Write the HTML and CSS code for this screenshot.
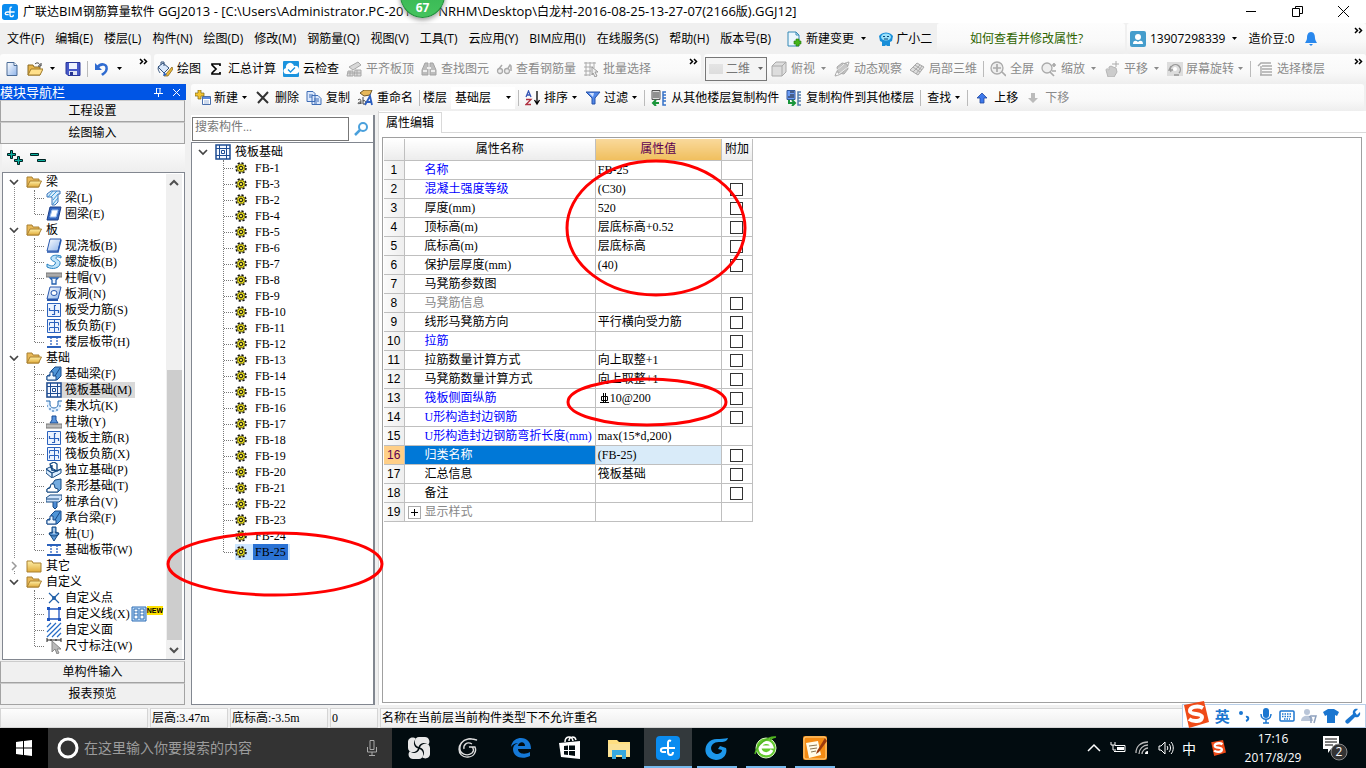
FILE: index.html
```html
<!DOCTYPE html>
<html lang="zh-CN">
<head>
<meta charset="utf-8">
<title>广联达BIM钢筋算量软件 GGJ2013</title>
<link rel="stylesheet" href="styles.css">
</head>
<body>
<svg class="sprite" aria-hidden="true">
<defs>
<linearGradient id="gBlue" x1="0" y1="0" x2="1" y2="1"><stop offset="0" stop-color="#fff"/><stop offset="1" stop-color="#8fb4ea"/></linearGradient>
<linearGradient id="gFold" x1="0" y1="0" x2="0" y2="1"><stop offset="0" stop-color="#fff0a8"/><stop offset="1" stop-color="#e0ab3a"/></linearGradient>
</defs>
<symbol id="caret" viewBox="0 0 7 4"><path d="M1 0h5L3.500 3z" fill="currentColor"/></symbol>
<symbol id="more" viewBox="0 0 9 7"><path d="M1 1l2.500 2.500L1 6M5 1l2.500 2.500L5 6" fill="none" stroke="#000" stroke-width="1.500"/></symbol>
<symbol id="logo" viewBox="0 0 24 24"><rect width="24" height="24" rx="4" fill="#0a8cf0"/><path d="M15 5c-2-1-3 0-3 2v9c0 4 5 4 5 0M19 12H8c-4 0-4 4-1 4h3" fill="none" stroke="#fff" stroke-width="2"/></symbol>
<symbol id="new" viewBox="0 0 16 16"><path d="M3 1.500h7l3 3v10H3z" fill="url(#gBlue)" stroke="#4a6b96"/><path d="M10 1.500v3h3" fill="#fff" stroke="#4a6b96"/></symbol>
<symbol id="open" viewBox="0 0 16 16"><path d="M1 14V4h5l1 2h6v8z" fill="#e7b64d" stroke="#8c6a22"/><path d="M1 14l3-6h12l-3 6z" fill="#ffe08a" stroke="#a07a28"/><path d="M8 3c2-2 4-1 5 1m1-2v3h-3" fill="none" stroke="#333"/></symbol>
<symbol id="save" viewBox="0 0 16 16"><path d="M1 1.500h14v13H3l-2-2z" fill="#4658c8" stroke="#28369a"/><path d="M4 2h8v6H4z" fill="#eef2ff"/><path d="M4 10h8v4H4z" fill="#dfe4f4"/><path d="M5 11h3v3H5z" fill="#26338f"/></symbol>
<symbol id="undo" viewBox="0 0 16 16"><path d="M3 7c4-6 12-4 9 3-1 2-3 3-4 4" fill="none" stroke="#2f6bd0" stroke-width="2.500"/><path d="M1 2v7h7z" fill="#2f6bd0"/></symbol>
<symbol id="paint" viewBox="0 0 16 16"><path d="M1 6l5-4 6 5-5 5z" fill="#dbe9fb" stroke="#32527d"/><path d="M2 5c-2 3 0 5 1 7M4 4V1h3v4" fill="none" stroke="#32527d"/><path d="M15 6l-6 7-2 2h4l5-7z" fill="#ebb83c" stroke="#7b5a12" stroke-width=".700"/><path d="M7 11l3 3-4 1z" fill="#2862c4"/></symbol>
<symbol id="sigma" viewBox="0 0 16 16"><path d="M12 5V3H4v1l4 4-4 4v1h8v-2" fill="none" stroke="#000" stroke-width="1.700"/></symbol>
<symbol id="cloud" viewBox="0 0 16 16"><rect width="16" height="16" rx="1" fill="#1b93de"/><path d="M4 13a3 3 0 01-1-6 4 4 0 018-2 4 4 0 012 8z" fill="#fff"/><path d="M5 8.500l2.500 2.500L12 6.500" fill="none" stroke="#1b93de" stroke-width="1.300"/></symbol>
<symbol id="gslab" viewBox="0 0 16 16"><path d="M3 6l9-5 3 3-8 5zM2 10h5v5H1zM9 9h6v6H8z" fill="#d8d8d8" stroke="#a8a8a8"/><path d="M2 12h13M4 10v5M11 9v6" stroke="#a8a8a8"/></symbol>
<symbol id="gbino" viewBox="0 0 16 16"><path d="M4 2h3v12H1V9zM9 2h3l3 7v5H9z" fill="#bdbdbd" stroke="#a3a3a3"/><path d="M6 7h4M2 10h4M10 10h4" stroke="#eee" stroke-width="2"/></symbol>
<symbol id="gglass" viewBox="0 0 16 16"><path d="M2 9l4-5M11 9l3-5 1 1v5" fill="none" stroke="#aaa" stroke-width="1.500"/><circle cx="4" cy="10" r="2.500" fill="#eee" stroke="#aaa" stroke-width="1.300"/><circle cx="11" cy="10" r="2.500" fill="#eee" stroke="#aaa" stroke-width="1.300"/></symbol>
<symbol id="gbatch" viewBox="0 0 16 16"><path d="M1 2h12M1 6h9M1 10h7M1 14h6M3 1v14M7 1v14M11 1v6" stroke="#aaa" fill="none"/><path d="M9 6l6 5h-3l2 4-2 1-2-4-1 2z" fill="#eee" stroke="#999"/></symbol>
<symbol id="gcube" viewBox="0 0 16 16"><path d="M1 5l4-4h10v10l-4 4H1z" fill="#ddd" stroke="#aaa"/><path d="M1 5h10v10M11 5l4-4" fill="none" stroke="#aaa"/></symbol>
<symbol id="gorbit" viewBox="0 0 16 16"><path d="M3 6l5-4 5 1 1 5-4 5-6-1z" fill="#c8c8c8" stroke="#aaa"/><path d="M15 1C8 2 3 8 1 15c7-1 13-7 14-14z" fill="none" stroke="#aaa"/><path d="M2 10l8-7M5 13l9-7" stroke="#eee"/></symbol>
<symbol id="gpart" viewBox="0 0 16 16"><path d="M1 9l7-7 7 4-6 8z" fill="#ddd" stroke="#aaa"/><path d="M4 6l7 5M6 4l7 5M4 11l7-7M7 13l6-8" stroke="#aaa"/></symbol>
<symbol id="gfull" viewBox="0 0 16 16"><circle cx="7" cy="7" r="6" fill="#eee" stroke="#aaa" stroke-width="1.300"/><path d="M3 7h8M7 3v8M12 11l4 4" stroke="#aaa" stroke-width="1.700"/></symbol>
<symbol id="gzoom" viewBox="0 0 16 16"><circle cx="6" cy="7" r="5" fill="#eee" stroke="#aaa" stroke-width="1.300"/><path d="M9 11l4 4M11 4h4M13 2v4M11 10h4" stroke="#aaa" stroke-width="1.700"/></symbol>
<symbol id="gpan" viewBox="0 0 16 16"><path d="M2 9c1-3 2 0 3 0V6l2-1 2 1 3 1 1 4-3 5H4z" fill="#ccc" stroke="#b5b5b5"/><path d="M8 3h7M12 0v6" stroke="#aaa"/></symbol>
<symbol id="grot" viewBox="0 0 16 16"><path d="M0 1h16v14H0z" fill="#ddd"/><path d="M4 11a5 5 0 118 1M4 5L2 9h4M12 14h-5" fill="none" stroke="#999" stroke-width="1.300"/><circle cx="8" cy="8" r="2" fill="#fff"/></symbol>
<symbol id="gfloor" viewBox="0 0 16 16"><path d="M1 5l3-3h10M5 5h10M5 8h10M5 11h10M3 14h12M4 5v9" fill="none" stroke="#aaa" stroke-width="1.400"/></symbol>
<symbol id="add" viewBox="0 0 16 16"><path d="M7.500 6.500h8v8h-8z" fill="#fff" stroke="#4b70ad"/><path d="M8 7h7v2H8z" fill="#5e8be0"/><path d="M9 11h5M9 13h5" stroke="#9db5da"/><path d="M3 0h3v3h3v3H6v3H3V6H0V3h3z" fill="#f4c430" stroke="#7a6414" stroke-width=".700"/></symbol>
<symbol id="del" viewBox="0 0 16 16"><path d="M2 2l11 11M13 2L3 13" stroke="#333" stroke-width="2"/></symbol>
<symbol id="copy" viewBox="0 0 16 16"><path d="M1 1.500h6l2 2v8H1zM6 5.500h6l3 3v6H6z" fill="#dce9fd" stroke="#3f6db5"/><path d="M3 5h4M3 7h3M8 9h5M8 11h5M8 13h3" stroke="#3f6db5"/></symbol>
<symbol id="rename" viewBox="0 0 16 16"><path d="M3 3l4-3h8l-2 5-6 1z" fill="#e7b85a" stroke="#6d572a"/><path d="M1 10c3-2 3 0 3 4M4 12c-4 0-4 3 0 1M6 7v7c4 1 3-5 0-3" fill="none" stroke="#444"/><path d="M8 15l5-9 2 9M10 12h5" fill="none" stroke="#2d5fc0" stroke-width="1.800"/></symbol>
<symbol id="sort" viewBox="0 0 16 16"><path d="M1 7l2.500-6L6 7M2 5h3" fill="none" stroke="#3656b5" stroke-width="1.300"/><path d="M1 9.500h5l-5 5h5" fill="none" stroke="#b03040" stroke-width="1.300"/><path d="M12 1v12M9.500 10l2.500 4 2.500-4" fill="none" stroke="#000" stroke-width="1.300"/></symbol>
<symbol id="filter" viewBox="0 0 16 16"><path d="M1 2h14l-5 6v6H7V8z" fill="#4f86e8" stroke="#2853a8"/><path d="M4 3h5l-1 4z" fill="#cfe0ff"/></symbol>
<symbol id="cpf" viewBox="0 0 16 16"><path d="M1 .500h8v9H1z" fill="#ddd" stroke="#555"/><path d="M2 3h6M2 5h6M2 7h6" stroke="#444"/><path d="M15 2h-3v13h3M12 5h3M12 8h3M12 11h3" stroke="#3672c8" fill="none" stroke-width="1.500"/><path d="M2 13h6M5 10l-3 3 3 3" stroke="#19953a" fill="none" stroke-width="2"/></symbol>
<symbol id="cpt" viewBox="0 0 16 16"><path d="M1 .500h8v9H1z" fill="#6c9cf5" stroke="#345b9f"/><path d="M4 2h4M4 5h4M2 7h6" stroke="#222"/><path d="M15 2h-3v13h3M12 5h3M12 8h3M12 11h3" stroke="#567fae" fill="none" stroke-width="1.500"/><path d="M3 10v3h5M6 10l3 3-3 3" stroke="#19953a" fill="none" stroke-width="2"/></symbol>
<symbol id="up" viewBox="0 0 16 16"><path d="M8 3l5 5h-3v5H6V8H3z" fill="#3d78ea" stroke="#2148a0" stroke-width=".800"/></symbol>
<symbol id="down" viewBox="0 0 16 16"><path d="M8 13l5-5h-3V3H6v5H3z" fill="#bbb"/></symbol>
<symbol id="docadd" viewBox="0 0 16 16"><path d="M2 1h8l3 3v11H2z" fill="#eaf6fd" stroke="#3488b5"/><path d="M10 1v3h3" fill="none" stroke="#3488b5"/><path d="M10 8h3v2h2v3h-2v2h-3v-2H8v-3h2z" fill="#44b51a" stroke="#26760b" stroke-width=".600"/></symbol>
<symbol id="robot" viewBox="0 0 16 16"><path d="M3 3a7 5 0 0110 0l2 2-1 5-2 1v4h-3l-1-1-1 1H4v-4l-2-1-1-5z" fill="#198ed8"/><ellipse cx="8" cy="6" rx="5" ry="3.500" fill="#9be2fb"/><path d="M5 5.500h2M9 5.500h2M6 8h4" stroke="#0a4478" stroke-width="1.200"/></symbol>
<symbol id="user" viewBox="0 0 16 16"><rect width="16" height="16" rx="2" fill="#459dcc"/><circle cx="8" cy="6" r="3" fill="#fff"/><path d="M3 13c0-4 3-4 5-2 2-2 5-2 5 2z" fill="#fff"/></symbol>
<symbol id="bell" viewBox="0 0 16 16"><path d="M8 1c3 0 4 3 4 6 0 2 1 3 2 5H2c1-2 2-3 2-5 0-3 1-6 4-6z" fill="#2988ed"/><path d="M6 13h4l-2 2z" fill="#2988ed"/></symbol>
<symbol id="expd" viewBox="0 0 12 12"><path d="M2 4l4 4 4-4" fill="none" stroke="#444" stroke-width="1.700"/></symbol>
<symbol id="expr" viewBox="0 0 12 12"><path d="M4 2l4 4-4 4" fill="none" stroke="#999" stroke-width="1.500"/></symbol>
<symbol id="fo" viewBox="0 0 16 16"><path d="M1 13V3h5l1 2h6v8z" fill="#e9b958" stroke="#a98030"/><path d="M1 13l3-6h11.500l-3 6z" fill="url(#gFold)" stroke="#a98030"/></symbol>
<symbol id="fc" viewBox="0 0 16 16"><path d="M1 14V3h5l1 2h8v9z" fill="url(#gFold)" stroke="#a98030"/></symbol>
<symbol id="beam" viewBox="0 0 16 16"><path d="M1 4l4-3h9v3h-2v8l-3 3H6V7H1z" fill="#d9ecfc" stroke="#3c74b8"/><path d="M2 7l5-6M5 7l6-6M7 10l5-6M7 14l5-6" stroke="#3c9ad8"/></symbol>
<symbol id="ring" viewBox="0 0 16 16"><path d="M4 1h11l-3 13H1z" fill="#3467c0" stroke="#1b3f8a"/><path d="M6 4h6l-2 7H4z" fill="#fff" stroke="#9fc2f2"/></symbol>
<symbol id="slab" viewBox="0 0 16 16"><path d="M4 1h11l-3 12H1z" fill="url(#gBlue)" stroke="#2757ad"/><path d="M1 14h11l3-12" fill="none" stroke="#2757ad" stroke-width="1.500"/></symbol>
<symbol id="spiral" viewBox="0 0 16 16"><path d="M15 2C9 0 4 2 5 5s6 2 4 5-5 2-8 0v3c6 3 12 1 13-3s-4-4-4-6 3-1 5 0z" fill="#bfe4fa" stroke="#227ec0"/></symbol>
<symbol id="cap" viewBox="0 0 16 16"><path d="M0 3h16v4H0z" fill="#aaa" stroke="#777"/><path d="M4 8h8l-2 2v4H6v-4z" fill="#eef5ff" stroke="#2460b0" stroke-width="1.300"/></symbol>
<symbol id="hole" viewBox="0 0 16 16"><path d="M4 1h11l-3 12H1z" fill="url(#gBlue)" stroke="#2757ad"/><path d="M1 14h11" stroke="#2757ad" stroke-width="2"/><ellipse cx="8" cy="7" rx="3" ry="2.500" fill="#fff" stroke="#2757ad"/></symbol>
<symbol id="bar1" viewBox="0 0 16 16"><path d="M1.500 1.500h13v13h-13z" fill="#edf4ff" stroke="#2b62bd"/><path d="M10 3.500H8.500v9H6M3.500 6v2.500h9V11" fill="none" stroke="#2b62bd" stroke-width="1.200"/></symbol>
<symbol id="bar2" viewBox="0 0 16 16"><path d="M1.500 1.500h13v13h-13z" fill="#edf4ff" stroke="#2b62bd"/><path d="M8.500 2v12M3.500 7.500v-3h9v3M3.500 12.500v-3h9v3" fill="none" stroke="#2b62bd"/></symbol>
<symbol id="strip" viewBox="0 0 16 16"><path d="M1 3h14M1 13h14" stroke="#2b62bd" stroke-width="2"/><path d="M5 3v10M11 3v10" stroke="#2b62bd" stroke-width="1.300" stroke-dasharray="2 1"/></symbol>
<symbol id="found" viewBox="0 0 16 16"><path d="M1 14v-4l4-2V5l4-4h6v9l-4 4z" fill="#4e94d6" stroke="#174a8b"/><path d="M1 14v-4h3V6h3v4h3v4z" fill="#eef7ff" stroke="#174a8b"/><path d="M9 10l5-8" stroke="#174a8b"/></symbol>
<symbol id="raft" viewBox="0 0 16 16"><path d="M1 1h14v14H1z" fill="#f4f8ff" stroke="#1e4c92" stroke-width="1.500"/><path d="M1 4.500h14M1 11.500h14M4.500 1v14M11.500 1v14" stroke="#1e4c92"/><path d="M6.500 6.500h3v3h-3z" fill="#fff" stroke="#1e4c92"/></symbol>
<symbol id="pit" viewBox="0 0 16 16"><path d="M1 3h3v4c1 4 7 4 8 0V3h3v5c-1 8-13 8-14 0z" fill="#dfefff"/><path d="M0 3h4v4c1 4 7 4 8 0V3h4" fill="none" stroke="#2468ae"/><path d="M1 8h1M3 11h2M6 13h2M10 12h2M13 8h2" stroke="#2468ae"/></symbol>
<symbol id="pier" viewBox="0 0 16 16"><path d="M6 2h4v4l2 3H4l2-3z" fill="#5b96df" stroke="#174b95"/><path d="M0 10h16v4H0z" fill="#bbb" stroke="#777"/></symbol>
<symbol id="iso" viewBox="0 0 16 16"><path d="M0 7l4-2 7 4 4-2v4l-9 5-6-5z" fill="#dceeff" stroke="#174a82"/><path d="M4 2l4-2 3 2v7L6 8zM6 3v6M0 7l6 4v4M6 11l9-4" fill="none" stroke="#174a82" stroke-width="1.300"/></symbol>
<symbol id="stripf" viewBox="0 0 16 16"><path d="M1 14v-3l3-2 5-7 6-1v10l-3 3z" fill="#74abdf" stroke="#174a82"/><path d="M1 14v-3l3-1 1-4h3l1 4 3 1v3z" fill="#fff" stroke="#174a82"/></symbol>
<symbol id="pcap" viewBox="0 0 16 16"><path d="M0 4l4-3h12v4l-3 3H0z" fill="#cfe3fa" stroke="#174a82"/><path d="M0 5h13M7 8v5l2 2 2-2V8" fill="#4d8bd4" stroke="#174a82"/></symbol>
<symbol id="pile" viewBox="0 0 16 16"><path d="M6 1h4v6h3L8 15 3 7h3z" fill="#5d99d6" stroke="#174a82"/><ellipse cx="8" cy="8" rx="5" ry="2" fill="none" stroke="#174a82"/><path d="M8 2v6" stroke="#fff"/></symbol>
<symbol id="pt" viewBox="0 0 16 16"><path d="M3 3l10 10M13 3L3 13" stroke="#2160a8" stroke-width="1.200"/><circle cx="8" cy="8" r="2" fill="#2160a8"/></symbol>
<symbol id="ln" viewBox="0 0 16 16"><path d="M3 3h10v10H3z" fill="#fff" stroke="#1e55c0" stroke-width="1.300"/><path d="M1 1h3v3H1zM12 1h3v3h-3zM1 12h3v3H1zM12 12h3v3h-3z" fill="#1e55c0"/></symbol>
<symbol id="face" viewBox="0 0 16 16"><path d="M1 5l4-4M1 10l9-9M1 15L15 1M6 15l9-9M11 15l4-4" stroke="#246bc5" stroke-width="1.200"/></symbol>
<symbol id="dim" viewBox="0 0 16 16"><path d="M1 0v4M15 0v4M1 2h14M5 1v2M10 1v2" stroke="#222"/><path d="M6 3v11l3-3 2 5 2-1-2-4h4z" fill="#bbb" stroke="#888"/></symbol>
<symbol id="book" viewBox="0 0 16 16"><path d="M1 1h14v14H1z" fill="#bfdcf8" stroke="#2d6cb5"/><path d="M3 3h4v10H3zM9 3h4v10H9z" fill="#fff" stroke="#2d6cb5"/><path d="M3 6h4M3 9h4M9 6h4M9 9h4" stroke="#2d6cb5"/></symbol>
<symbol id="gear" viewBox="0 0 12 12"><circle cx="6" cy="6" r="5" fill="none" stroke="#111" stroke-width="1.600" stroke-dasharray="2.200 1.700"/><circle cx="6" cy="6" r="4" fill="#f2e61c" stroke="#55500a" stroke-width=".600"/><path d="M6 2v8M2 6h8M3.200 3.200l5.600 5.600M8.800 3.200L3.200 8.800" stroke="#55500a" stroke-width=".700"/><circle cx="6" cy="6" r="1.600" fill="#fff34d" stroke="#222"/></symbol>
<symbol id="sogou" viewBox="0 0 27 27"><path d="M2 4l20-4 5 21-20 6z" fill="#ef4b19"/><path d="M21 7c-5-3-14-1-13 3 0 4 12 2 12 6 0 5-9 5-13 2" fill="none" stroke="#fff" stroke-width="4"/></symbol>
</svg>

<div class="app">
<header class="titlebar">
  <svg class="i16"><use href="#logo"/></svg>
  <h1>广联达<span>BIM</span>钢筋算量软件<span> GGJ2013 - [C:\Users\Administrator.PC-2014</span><span class="rest">NRHM\Desktop\</span>白龙村<span>-2016-08-25-13-27-07(2166</span>版<span>).GGJ12]</span></h1>
  <div class="winbtns">
    <button aria-label="最小化"><svg viewBox="0 0 11 11"><path d="M0 5.500h10" stroke="#000"/></svg></button>
    <button aria-label="还原"><svg viewBox="0 0 11 11"><path d="M.500 2.500h7v8h-7zM3.500 2.500v-2h7v7h-3" fill="none" stroke="#000"/></svg></button>
    <button aria-label="关闭"><svg viewBox="0 0 11 11"><path d="M0 0l11 11M11 0L0 11" stroke="#000"/></svg></button>
  </div>
  <div class="badge">67</div>
</header>

<div class="menurow">
  <nav class="menu">
    <button>文件(F)</button><button>编辑(E)</button><button>楼层(L)</button><button>构件(N)</button><button>绘图(D)</button><button>修改(M)</button><button>钢筋量(Q)</button><button>视图(V)</button><button>工具(T)</button><button>云应用(Y)</button><button>BIM应用(I)</button><button>在线服务(S)</button><button>帮助(H)</button><button>版本号(B)</button>
    <button class="tb change"><svg class="i16"><use href="#docadd"/></svg>新建变更<svg class="caret"><use href="#caret"/></svg></button>
    <button class="tb tight"><svg class="i16"><use href="#robot"/></svg>广小二</button>
  </nav>
  <div class="strip hint"><a href="#help">如何查看并修改属性?</a></div>
  <div class="strip account">
    <button class="tb"><svg class="i16"><use href="#user"/></svg>13907298339<svg class="caret"><use href="#caret"/></svg></button>
    <button class="tb">造价豆:0</button>
    <button class="tb" aria-label="通知"><svg class="i16"><use href="#bell"/></svg></button>
    <button class="more" aria-label="更多"><svg><use href="#more"/></svg></button>
  </div>
</div>

<div class="toolrow">
  <div class="strip files">
    <button class="tb" aria-label="新建"><svg class="i16"><use href="#new"/></svg></button>
    <button class="tb" aria-label="打开"><svg class="i16"><use href="#open"/></svg><svg class="caret"><use href="#caret"/></svg></button>
    <button class="tb" aria-label="保存"><svg class="i16"><use href="#save"/></svg></button>
    <i class="sep"></i>
    <button class="tb" aria-label="撤销"><svg class="i16"><use href="#undo"/></svg><svg class="caret"><use href="#caret"/></svg></button>
    <button class="more" aria-label="更多"><svg><use href="#more"/></svg></button>
  </div>
  <div class="strip draw">
    <button class="tb"><svg class="i16"><use href="#paint"/></svg>绘图</button>
    <button class="tb"><svg class="i16"><use href="#sigma"/></svg>汇总计算</button>
    <button class="tb"><svg class="i16"><use href="#cloud"/></svg>云检查</button>
    <button class="tb" disabled><svg class="i16"><use href="#gslab"/></svg>平齐板顶</button>
    <button class="tb" disabled><svg class="i16"><use href="#gbino"/></svg>查找图元</button>
    <button class="tb" disabled><svg class="i16"><use href="#gglass"/></svg>查看钢筋量</button>
    <button class="tb" disabled><svg class="i16"><use href="#gbatch"/></svg>批量选择</button>
    <button class="more" aria-label="更多"><svg><use href="#more"/></svg></button>
  </div>
  <div class="strip view">
    <select class="dim" aria-label="视图" disabled><option>二维</option></select>
    <button class="tb" disabled><svg class="i16"><use href="#gcube"/></svg>俯视<svg class="caret"><use href="#caret"/></svg></button>
    <button class="tb" disabled><svg class="i16"><use href="#gorbit"/></svg>动态观察</button>
    <button class="tb" disabled><svg class="i16"><use href="#gpart"/></svg>局部三维</button>
    <i class="sep"></i>
    <button class="tb" disabled><svg class="i16"><use href="#gfull"/></svg>全屏</button>
    <button class="tb" disabled><svg class="i16"><use href="#gzoom"/></svg>缩放<svg class="caret"><use href="#caret"/></svg></button>
    <button class="tb" disabled><svg class="i16"><use href="#gpan"/></svg>平移<svg class="caret"><use href="#caret"/></svg></button>
    <button class="tb near" disabled><svg class="i16"><use href="#grot"/></svg>屏幕旋转<svg class="caret"><use href="#caret"/></svg></button>
    <i class="sep"></i>
    <button class="tb" disabled><svg class="i16"><use href="#gfloor"/></svg>选择楼层</button>
    <button class="more" aria-label="更多"><svg><use href="#more"/></svg></button>
  </div>
</div>

<main class="work">
<aside class="nav">
  <h2>模块导航栏<span><svg viewBox="0 0 9 9"><path d="M2 0h5M2.500 0v5M6 0v5M0 5.500h9M4.500 6v3" stroke="#fff" fill="none"/></svg><svg viewBox="0 0 9 9"><path d="M1 1l7 7M8 1L1 8" stroke="#fff"/></svg></span></h2>
  <button class="navbtn">工程设置</button>
  <button class="navbtn">绘图输入</button>
  <div class="pm"><svg viewBox="0 0 42 16" aria-hidden="true"><path d="M3.500 .500h2v3h3v2h-3v3h-2v-3h-3v-2h3zM10.500 6.500h2v3h3v2h-3v3h-2v-3h-3v-2h3zM23.500 3.500h8v2h-8zM30.500 9.500h8v2h-8z" fill="#0bb0a0" stroke="#022"/></svg></div>
  <div class="treebox">
  <ul class="tree">
    <li><div><svg class="ex"><use href="#expd"/></svg><svg class="i16"><use href="#fo"/></svg>梁</div>
      <ul><li><svg class="i16"><use href="#beam"/></svg>梁(L)</li><li><svg class="i16"><use href="#ring"/></svg>圈梁(E)</li></ul></li>
    <li><div><svg class="ex"><use href="#expd"/></svg><svg class="i16"><use href="#fo"/></svg>板</div>
      <ul><li><svg class="i16"><use href="#slab"/></svg>现浇板(B)</li><li><svg class="i16"><use href="#spiral"/></svg>螺旋板(B)</li><li><svg class="i16"><use href="#cap"/></svg>柱帽(V)</li><li><svg class="i16"><use href="#hole"/></svg>板洞(N)</li><li><svg class="i16"><use href="#bar1"/></svg>板受力筋(S)</li><li><svg class="i16"><use href="#bar2"/></svg>板负筋(F)</li><li><svg class="i16"><use href="#strip"/></svg>楼层板带(H)</li></ul></li>
    <li><div><svg class="ex"><use href="#expd"/></svg><svg class="i16"><use href="#fo"/></svg>基础</div>
      <ul><li><svg class="i16"><use href="#found"/></svg>基础梁(F)</li><li class="cur"><svg class="i16"><use href="#raft"/></svg>筏板基础(M)</li><li><svg class="i16"><use href="#pit"/></svg>集水坑(K)</li><li><svg class="i16"><use href="#pier"/></svg>柱墩(Y)</li><li><svg class="i16"><use href="#bar1"/></svg>筏板主筋(R)</li><li><svg class="i16"><use href="#bar2"/></svg>筏板负筋(X)</li><li><svg class="i16"><use href="#iso"/></svg>独立基础(P)</li><li><svg class="i16"><use href="#stripf"/></svg>条形基础(T)</li><li><svg class="i16"><use href="#pcap"/></svg>桩承台(V)</li><li><svg class="i16"><use href="#found"/></svg>承台梁(F)</li><li><svg class="i16"><use href="#pile"/></svg>桩(U)</li><li><svg class="i16"><use href="#strip"/></svg>基础板带(W)</li></ul></li>
    <li><div><svg class="ex"><use href="#expr"/></svg><svg class="i16"><use href="#fc"/></svg>其它</div></li>
    <li><div><svg class="ex"><use href="#expd"/></svg><svg class="i16"><use href="#fo"/></svg>自定义</div>
      <ul><li><svg class="i16"><use href="#pt"/></svg>自定义点</li><li><svg class="i16"><use href="#ln"/></svg>自定义线(X)<svg class="i16 bk"><use href="#book"/></svg><b class="newtag">NEW</b></li><li><svg class="i16"><use href="#face"/></svg>自定义面</li><li><svg class="i16"><use href="#dim"/></svg>尺寸标注(W)</li></ul></li>
  </ul>
  <div class="scroll"><svg viewBox="0 0 12 12"><path d="M2 8l4-4 4 4" fill="none" stroke="#505050" stroke-width="2"/></svg><i></i><svg viewBox="0 0 12 12"><path d="M2 4l4 4 4-4" fill="none" stroke="#505050" stroke-width="2"/></svg></div>
  </div>
  <button class="navbtn">单构件输入</button>
  <button class="navbtn">报表预览</button>
</aside>

<section class="content">
  <div class="strip edit">
    <button class="tb near"><svg class="i16"><use href="#add"/></svg>新建<svg class="caret"><use href="#caret"/></svg></button>
    <button class="tb"><svg class="i16"><use href="#del"/></svg>删除</button>
    <button class="tb"><svg class="i16"><use href="#copy"/></svg>复制</button>
    <button class="tb"><svg class="i16"><use href="#rename"/></svg>重命名</button>
    <i class="sep"></i>
    <label class="floor">楼层<select><option>基础层</option></select></label>
    <i class="sep"></i>
    <button class="tb near"><svg class="i16"><use href="#sort"/></svg>排序<svg class="caret"><use href="#caret"/></svg></button>
    <button class="tb near"><svg class="i16"><use href="#filter"/></svg>过滤<svg class="caret"><use href="#caret"/></svg></button>
    <i class="sep"></i>
    <button class="tb"><svg class="i16"><use href="#cpf"/></svg>从其他楼层复制构件</button>
    <button class="tb"><svg class="i16"><use href="#cpt"/></svg>复制构件到其他楼层</button>
    <i class="sep"></i>
    <button class="tb near">查找<svg class="caret"><use href="#caret"/></svg></button>
    <i class="sep"></i>
    <button class="tb"><svg class="i16"><use href="#up"/></svg>上移</button>
    <button class="tb" disabled><svg class="i16"><use href="#down"/></svg>下移</button>
  </div>
  <div class="panes">
    <section class="parts">
      <form class="search"><input type="text" placeholder="搜索构件..." aria-label="搜索构件"><button type="button" aria-label="搜索"><svg viewBox="0 0 16 16"><circle cx="10" cy="6" r="4" fill="#fff" stroke="#4aa0dc" stroke-width="2"/><path d="M7 9l-5 5" stroke="#4aa0dc" stroke-width="2.500"/></svg></button></form>
      <ul class="tree ptree">
        <li><div><svg class="ex"><use href="#expd"/></svg><svg class="i16"><use href="#raft"/></svg>筏板基础</div>
        <ul>
          <li><svg class="gr"><use href="#gear"/></svg><span>FB-1</span></li><li><svg class="gr"><use href="#gear"/></svg><span>FB-3</span></li><li><svg class="gr"><use href="#gear"/></svg><span>FB-2</span></li><li><svg class="gr"><use href="#gear"/></svg><span>FB-4</span></li><li><svg class="gr"><use href="#gear"/></svg><span>FB-5</span></li><li><svg class="gr"><use href="#gear"/></svg><span>FB-6</span></li><li><svg class="gr"><use href="#gear"/></svg><span>FB-7</span></li><li><svg class="gr"><use href="#gear"/></svg><span>FB-8</span></li><li><svg class="gr"><use href="#gear"/></svg><span>FB-9</span></li><li><svg class="gr"><use href="#gear"/></svg><span>FB-10</span></li><li><svg class="gr"><use href="#gear"/></svg><span>FB-11</span></li><li><svg class="gr"><use href="#gear"/></svg><span>FB-12</span></li><li><svg class="gr"><use href="#gear"/></svg><span>FB-13</span></li><li><svg class="gr"><use href="#gear"/></svg><span>FB-14</span></li><li><svg class="gr"><use href="#gear"/></svg><span>FB-15</span></li><li><svg class="gr"><use href="#gear"/></svg><span>FB-16</span></li><li><svg class="gr"><use href="#gear"/></svg><span>FB-17</span></li><li><svg class="gr"><use href="#gear"/></svg><span>FB-18</span></li><li><svg class="gr"><use href="#gear"/></svg><span>FB-19</span></li><li><svg class="gr"><use href="#gear"/></svg><span>FB-20</span></li><li><svg class="gr"><use href="#gear"/></svg><span>FB-21</span></li><li><svg class="gr"><use href="#gear"/></svg><span>FB-22</span></li><li><svg class="gr"><use href="#gear"/></svg><span>FB-23</span></li><li><svg class="gr"><use href="#gear"/></svg><span>FB-24</span></li><li class="sel"><svg class="gr"><use href="#gear"/></svg><span>FB-25</span></li>
        </ul></li>
      </ul>
    </section>
    <section class="props">
      <div class="tabs"><button>属性编辑</button></div>
      <div class="sheet">
      <table>
        <colgroup><col class="c1"><col class="c2"><col class="c3"><col class="c4"></colgroup>
        <thead><tr><th></th><th>属性名称</th><th class="hot">属性值</th><th>附加</th></tr></thead>
        <tbody>
        <tr><th>1</th><td class="b">名称</td><td>FB-25</td><td></td></tr>
        <tr><th>2</th><td class="b">混凝土强度等级</td><td>(C30)</td><td><input type="checkbox" aria-label="混凝土强度等级"></td></tr>
        <tr><th>3</th><td>厚度(mm)</td><td>520</td><td><input type="checkbox" aria-label="厚度"></td></tr>
        <tr><th>4</th><td>顶标高(m)</td><td>层底标高+0.52</td><td><input type="checkbox" aria-label="顶标高"></td></tr>
        <tr><th>5</th><td>底标高(m)</td><td>层底标高</td><td><input type="checkbox" aria-label="底标高"></td></tr>
        <tr><th>6</th><td>保护层厚度(mm)</td><td>(40)</td><td><input type="checkbox" aria-label="保护层厚度"></td></tr>
        <tr><th>7</th><td>马凳筋参数图</td><td></td><td></td></tr>
        <tr><th>8</th><td class="g">马凳筋信息</td><td></td><td><input type="checkbox" aria-label="马凳筋信息"></td></tr>
        <tr><th>9</th><td>线形马凳筋方向</td><td>平行横向受力筋</td><td><input type="checkbox" aria-label="线形马凳筋方向"></td></tr>
        <tr><th>10</th><td class="b">拉筋</td><td></td><td><input type="checkbox" aria-label="拉筋"></td></tr>
        <tr><th>11</th><td>拉筋数量计算方式</td><td>向上取整+1</td><td><input type="checkbox" aria-label="拉筋数量计算方式"></td></tr>
        <tr><th>12</th><td>马凳筋数量计算方式</td><td>向上取整+1</td><td><input type="checkbox" aria-label="马凳筋数量计算方式"></td></tr>
        <tr><th>13</th><td class="b">筏板侧面纵筋</td><td><svg class="rebar" viewBox="0 0 12 10"><path d="M3.500 3.500h6v4h-6zM5.500 0v9.500M7.500 0v9.500M2 9.500h9" fill="none" stroke="#000"/></svg>10@200</td><td><input type="checkbox" aria-label="筏板侧面纵筋"></td></tr>
        <tr><th>14</th><td class="b">U形构造封边钢筋</td><td></td><td><input type="checkbox" aria-label="U形构造封边钢筋"></td></tr>
        <tr><th>15</th><td class="b">U形构造封边钢筋弯折长度(mm)</td><td>max(15*d,200)</td><td></td></tr>
        <tr class="on"><th>16</th><td>归类名称</td><td>(FB-25)</td><td><input type="checkbox" aria-label="归类名称"></td></tr>
        <tr><th>17</th><td>汇总信息</td><td>筏板基础</td><td><input type="checkbox" aria-label="汇总信息"></td></tr>
        <tr><th>18</th><td>备注</td><td></td><td><input type="checkbox" aria-label="备注"></td></tr>
        <tr><th>19</th><td class="g exp"><button aria-label="展开"><svg viewBox="0 0 11 11"><path d="M2 5.500h7M5.500 2v7" stroke="#000"/></svg></button>显示样式</td><td></td><td></td></tr>
        </tbody>
      </table>
      </div>
    </section>
  </div>
</section>
</main>

<footer class="status"><span class="s1"></span><span class="s2">层高:3.47m</span><span class="s3">底标高:-3.5m</span><span class="s4">0</span><span class="s5">名称在当前层当前构件类型下不允许重名</span>
  <div class="ime">
    <svg class="sg"><use href="#sogou"/></svg><b>英</b>
    <svg viewBox="0 0 16 16"><circle cx="5" cy="5" r="2" fill="#1b76d0"/><path d="M10 9c3-1 3 3 0 4" fill="none" stroke="#1b76d0" stroke-width="2"/></svg>
    <svg viewBox="0 0 16 16"><rect x="5" y="0" width="6" height="10" rx="3" fill="#1b76d0"/><path d="M3 6c0 7 10 7 10 0M8 11v4M5 15h6" fill="none" stroke="#1b76d0" stroke-width="1.500"/></svg>
    <svg viewBox="0 0 16 16"><rect x="1" y="3" width="14" height="10" rx="1" fill="#fff" stroke="#1b76d0" stroke-width="1.500"/><path d="M3 6h10M3 8.500h10M5 11h6" stroke="#1b76d0" stroke-width="1.300" stroke-dasharray="1.500 1"/></svg>
    <svg viewBox="0 0 16 16"><circle cx="6" cy="4" r="3" fill="#b9c5d8"/><path d="M0 13c0-7 12-7 12 0z" fill="#b9c5d8"/><path d="M8 9l2-1v7M11 8h4l-2 7" fill="none" stroke="#8da0bd" stroke-width="1.500"/></svg>
    <svg viewBox="0 0 16 16"><path d="M5 1h6l5 3-2 4-2-1v8H4V7L2 8 0 4z" fill="#1b76d0"/></svg>
    <svg viewBox="0 0 16 16"><path d="M1 15c-1-1-1-2 0-3l7-6c-1-4 2-6 5-5l-3 3 2 3 3-3c1 4-2 6-5 5l-6 6c-1 1-2 1-3 0z" fill="#1b76d0"/></svg>
  </div>
</footer>

<div class="taskbar">
  <button class="start" aria-label="开始"><svg viewBox="0 0 16 16"><path d="M0 2l7-1v6.500H0zM8 1l8-1v7.500H8zM0 8.500h7V15l-7-1zM8 8.500h8V16l-8-1z" fill="#fff"/></svg></button>
  <label class="find"><svg viewBox="0 0 22 22"><circle cx="11" cy="11" r="9" fill="none" stroke="#fff" stroke-width="3"/></svg><input type="text" placeholder="在这里输入你要搜索的内容" aria-label="搜索"><svg class="mic" viewBox="0 0 12 16"><path d="M4 .500h4v9H4zM1.500 7v5h9V7M6 12v3.500M3 15.500h6" fill="none" stroke="#aaa"/></svg></label>
  <div class="apps">
    <button aria-label="风扇"><svg viewBox="0 0 24 24"><g fill="#e8e8e8"><path id="petal" d="M11.500 11C6 9 7 1 12 1h6c4 0 6 5 3 8-2-3-8-3-9.500 2z"/><use href="#petal" transform="rotate(90 12 12)"/><use href="#petal" transform="rotate(180 12 12)"/><use href="#petal" transform="rotate(270 12 12)"/></g></svg></button>
    <button class="gapped" aria-label="G"><svg viewBox="0 0 24 24"><path d="M21 4c-8-3-16 0-17 7s7 10 12 6c3-3 1-7-3-6h6c2 4-1 10-7 10C0 22 0 5 12 3c4-1 6 1 9 1zM16 8c-5-3-9 1-8 5" fill="none" stroke="#ddd" stroke-width="1.300"/></svg></button>
    <button aria-label="Edge"><svg viewBox="0 0 24 24"><path d="M2 11C3 4 8 2 12 2c6 0 10 4 10 11H9c0 5 7 6 12 3v4c-8 4-17 1-17-7 0-3 2-5 5-6 0 0-5 0-7 4zM9 10h7c0-5-6-5-7 0z" fill="#1579d8" fill-rule="evenodd"/></svg></button>
    <button aria-label="应用商店"><svg viewBox="0 0 24 24"><path d="M1 7l21-2v18L3 21z" fill="#fff"/><path d="M7 6c0-6 7-7 8-1M11 5c0-5 6-5 7-1" fill="none" stroke="#fff" stroke-width="1.500"/><path d="M6 10l4-.500V14H6zM11 9.500h6V14h-6zM6 15h4v4l-4-.500zM11 15h6v5l-6-1z" fill="#020c10"/></svg></button>
    <button aria-label="文件资源管理器"><svg viewBox="0 0 24 24"><path d="M1 4h9l2 2h11v15H1z" fill="#ffdf81"/><path d="M1 8h22v12H1z" fill="#fbe297"/><path d="M5 14h14v9h-4v-4H9v4H5z" fill="#38a8dd"/></svg></button>
    <button class="active run" aria-label="广联达"><svg><use href="#logo"/></svg></button>
    <button class="run" aria-label="G+"><svg viewBox="0 0 24 24"><path d="M23 2c-1 4-5 4-8 4-10-1-12 10-4 12 4 0 6-2 6-4l-4-1 2-3 6 2c2 6-3 12-10 12C0 23-2 13 3 7 7 1 16 4 23 2z" fill="#1d97ea"/></svg></button>
    <button class="run" aria-label="浏览器"><svg viewBox="0 0 24 24"><circle cx="12" cy="12" r="10" fill="#63c92e" stroke="#d6f5c0"/><path d="M18 14c-3 6-12 4-12-2s10-8 12-1H7" fill="none" stroke="#fff" stroke-width="3"/><path d="M1 18C3 8 14 0 22 1c-3 0-5 2-6 3" fill="none" stroke="#4fb220" stroke-width="1.500"/></svg></button>
    <button class="run" aria-label="笔记"><svg viewBox="0 0 24 24"><rect width="24" height="24" rx="2" fill="#f48b13"/><rect x="1" y="1" width="22" height="22" rx="2" fill="none" stroke="#ffd58b"/><path d="M3 7l12-2 3 14-12 3z" fill="#fffbe8"/><path d="M6 10l8-1M7 13l7-1M8 16l5-1" stroke="#8a7550"/><path d="M22 2l-8 13-1 3 3-2 8-11z" fill="#9c3a0c"/></svg></button>
  </div>
  <div class="tray">
    <svg viewBox="0 0 16 16"><path d="M2 11l6-6 6 6" fill="none" stroke="#fff" stroke-width="1.500"/></svg>
    <svg viewBox="0 0 16 16"><path d="M5 5.500h10v6H4M1 2v3h4V2M3 5v5h3" fill="none" stroke="#fff"/><path d="M7 7h7v3H7z" fill="#fff"/></svg>
    <svg viewBox="0 0 16 16"><path d="M2 13C2 6 7 2 14 2M5 14c0-5 4-9 9-9M8 14c0-3 3-6 6-6" fill="none" stroke="#bbb" stroke-width="1.300"/><path d="M11 14c0-2 1-3 3-3v3z" fill="#fff"/></svg>
    <svg viewBox="0 0 16 16"><path d="M1 6h2l4-4v12l-4-4H1zM9 6c1 1 1 3 0 4M11 4c2 2 2 6 0 8M13 2c3 3 3 9 0 12" fill="none" stroke="#fff"/></svg>
    <b>中</b>
    <svg class="sgs"><use href="#sogou"/></svg>
    <time>17:16<br>2017/8/29</time>
    <button class="note" aria-label="通知"><svg viewBox="0 0 26 26"><path d="M1 1h16v13H9l-3 4v-4H1z" fill="#fff"/><path d="M3 4h12M3 7h12M3 10h8" stroke="#000"/><circle cx="17" cy="17" r="8" fill="#333" stroke="#888"/></svg><span>2</span></button>
  </div>
</div>
<svg class="marks" viewBox="0 0 1366 768" aria-hidden="true"><g fill="none" stroke="#f00" stroke-width="3"><ellipse cx="656" cy="228" rx="89" ry="67"/><ellipse cx="647" cy="402" rx="79" ry="23"/><ellipse cx="275" cy="564" rx="107" ry="31"/></g></svg>
</div>
</body>
</html>
```
FILE: styles.css
```css
* { box-sizing: border-box; }
body { margin: 0; background: #f0f0f0; color: #000; font: 12px/16px "Open Sans", "Noto Sans CJK SC", sans-serif; }
button, input, select { font: inherit; color: inherit; margin: 0; padding: 0; border: 0; background: none; border-radius: 0; }
button { white-space: nowrap; }
ul { list-style: none; margin: 0; padding: 0; }
h1, h2 { margin: 0; font: inherit; }
svg { flex: none; display: block; }
.sprite { position: absolute; width: 0; height: 0; }
.i16 { width: 16px; height: 16px; }
.app { position: relative; display: flex; flex-direction: column; min-height: 100vh; overflow: hidden; }

.titlebar { position: relative; display: flex; align-items: center; gap: 5px; height: 23px; padding-left: 2px; background: #fff; }
.titlebar h1 { flex: 1; min-width: 0; white-space: nowrap; }
.titlebar h1 span { font-size: 13px; }
.titlebar h1 .rest { margin-left: 20px; }
.winbtns { display: flex; }
.winbtns button { width: 46px; height: 20px; display: flex; align-items: center; justify-content: center; }
.winbtns svg { width: 11px; height: 11px; }
.badge { position: absolute; left: 400px; top: -28px; width: 45px; height: 46px; border-radius: 50%; background: linear-gradient(#2fae4c, #45c45e); border: 1px solid #218c3b; box-shadow: 0 2px 5px #999; color: #fff; font-weight: bold; text-align: center; padding-top: 27px; }

.menurow { display: flex; height: 31px; gap: 2px; }
.menu { display: flex; align-items: center; flex: 0 0 935px; gap: 11px; padding-left: 7px; }
.change { margin-left: 4px; }
.strip { display: flex; align-items: center; gap: 7px; background: linear-gradient(#fdfdfd, #f9f9f9 60%, #eee); border-radius: 3px; white-space: nowrap; }
.tb { display: flex; align-items: center; gap: 4px; }
.tb:disabled { color: #8a8a8a; }
.caret { width: 7px; height: 4px; margin: 0 2px; }
.change .caret { margin-right: 0; }
.view .caret { margin: 0 0 0 1px; }
.near .caret { margin: 0; }
.tb.near { gap: 3px; }
.tb.tight { gap: 2px; }
.more { align-self: flex-start; margin-left: auto; padding: 4px 3px; }
.more svg { width: 9px; height: 7px; }
.hint { flex: 0 0 188px; padding-left: 33px; }
.hint a { color: #2f6400; text-decoration: none; }
.account { flex: 1; padding-left: 3px; gap: 8px; }

.toolrow { display: flex; gap: 3px; height: 30px; }
.files { flex: 0 0 151px; padding-left: 4px; }
.draw { flex: 0 0 547px; padding-left: 3px; }
.view { flex: 1; padding-left: 1px; gap: 7px; }
.sep { width: 1px; height: 16px; background: #bbb; margin: 0 -1px; }
select { appearance: none; background: url("data:image/svg+xml,%3Csvg xmlns='http://www.w3.org/2000/svg' width='7' height='4'%3E%3Cpath d='M1 0h5L3.500 3z'/%3E%3C/svg%3E") no-repeat right 3px center; }
.dim { width: 62px; height: 24px; margin-right: -3px; padding-left: 20px; border: 1px solid #777; color: #777; opacity: 1; background-color: #f4f4f4; background-image: linear-gradient(#e4e4e4, #ddd), url("data:image/svg+xml,%3Csvg xmlns='http://www.w3.org/2000/svg' width='7' height='4'%3E%3Cpath fill='%23666' d='M1 0h5L3.500 3z'/%3E%3C/svg%3E"); background-size: 14px 10px, 7px 4px; background-position: 3px center, right 2px center; }

.work { flex: 1; display: flex; gap: 5px; }
.nav { flex: 0 0 185px; display: flex; flex-direction: column; font: 12px/16px "Liberation Serif", "Noto Sans CJK SC", serif; padding-right: 1px; }
.nav h2 { display: flex; align-items: center; justify-content: space-between; height: 16px; background: #0055e5; color: #fff; margin-right: -1px; padding-right: 5px; font: 13px/16px "Noto Sans CJK SC", sans-serif; }
.nav h2 span { display: flex; gap: 9px; }
.nav h2 svg { width: 9px; height: 9px; }
.navbtn { height: 22px; border: 1px solid #a3a3a3; border-top-color: #ccc; background: #f0f0f0; }
.pm { display: flex; align-items: center; height: 28px; background: linear-gradient(#fdfdfd, #eee); padding-left: 5px; margin-left: 2px; }
.pm svg { width: 42px; height: 16px; }
.treebox { flex: 1; display: flex; border: 1px solid #828790; margin: 0 0 1px 2px; background: #fff; padding: 1px 2px 0 0; }
.tree { flex: 1; min-width: 0; padding-left: 5px; white-space: nowrap; }
.tree div { display: flex; align-items: center; height: 16px; gap: 4px; }
.ex { width: 12px; height: 12px; margin-right: 2px; }
.tree > li { position: relative; }
.tree > li:not(:last-child)::before { content: ""; position: absolute; left: 6px; top: 13px; bottom: 0; border-left: 1px dotted #888; }
.tree ul { position: relative; padding-left: 38px; }
.tree ul::before { content: ""; position: absolute; left: 26px; top: 0; bottom: 8px; border-left: 1px dotted #777; }
.tree ul li { position: relative; display: flex; align-items: center; width: max-content; height: 16px; gap: 3px; padding-right: 3px; }
.tree ul li::before { content: ""; position: absolute; left: -11px; width: 9px; top: 8px; border-top: 1px dotted #777; }
.tree ul li.cur { background: #d9d9d9; }
.bk { margin-left: -2px; }
.newtag { background: #ffe100; font: bold 7px/9px "Liberation Sans", sans-serif; align-self: flex-start; margin-left: -3px; }
.scroll { flex: 0 0 16px; display: flex; flex-direction: column; align-items: center; background: #f0f0f0; gap: 4px; padding: 3px 0; }
.scroll svg { width: 12px; height: 12px; }
.scroll i { width: 15px; height: 270px; margin-top: auto; background: #cdcdcd; }

.content { flex: 1; min-width: 0; display: flex; flex-direction: column; }
.edit { height: 27px; padding-left: 4px; margin-right: 2px; }
.floor { display: flex; align-items: center; gap: 4px; margin: 0 -3px; }
.floor select { width: 64px; height: 22px; padding-left: 4px; background-color: #fff; }
.panes { flex: 1; display: flex; gap: 3px; }
.parts { flex: 0 0 184px; min-width: 0; display: flex; flex-direction: column; padding-top: 4px; font: 12px/16px "Liberation Serif", "Noto Sans CJK SC", serif; }
.search { display: flex; height: 27px; padding: 2px 0 1px 1px; background: #fff; border-right: 2px solid #828790; }
.search input { flex: 1; min-width: 0; border: 1px solid #777; padding: 0 2px 4px; }
.search input::placeholder { color: #777; opacity: 1; }
.search button { width: 24px; display: flex; align-items: center; justify-content: center; }
.search svg { width: 16px; height: 16px; }
.ptree { border: 1px solid #828790; border-right-width: 2px; background: #fff; padding: 1px 0 0 5px; }
.gr { width: 12px; height: 12px; }
.ptree ul li { gap: 6px; padding: 0 2px 0 0; }
.ptree ul li span { padding: 0 2px; }
.ptree .sel { background: #cde6ff; }
.ptree .sel span { background: #2a72d4; }

.props { flex: 1; min-width: 0; display: flex; flex-direction: column; padding-top: 1px; background: #fff; border-left: 1px solid #d9d9d9; }
.tabs { height: 21px; display: flex; border-bottom: 1px solid #d9d9d9; }
.tabs button { width: 63px; height: 21px; background: #fff; border: 1px solid #d9d9d9; border-width: 1px 1px 0 0; }
.sheet { flex: 1; margin: 4px 4px 2px 3px; border: 1px solid #a0a0a0; padding: 1px; }
table { width: 369px; border-collapse: collapse; table-layout: fixed; font: 12px/16px "Liberation Serif", "Noto Sans CJK SC", serif; }
.c1 { width: 20px; } .c2 { width: 191px; } .c3 { width: 126px; } .c4 { width: 31px; }
th, td { border: 1px solid #bfbfbf; padding: 0; white-space: nowrap; overflow: hidden; height: 19px; line-height: 16px; }
tr > :first-child { border-left: 0; }
thead th { height: 21px; border-top: 0; background: linear-gradient(#fff, #ececec); font-weight: normal; }
thead .hot { background: linear-gradient(#f9d99b, #f0bf5e); color: #5c0050; }
tbody th { font: 12px/16px "Liberation Sans", sans-serif; background: linear-gradient(90deg, #fafafa, #eee); }
td:nth-child(2) { padding-left: 20px; }
td:nth-child(3) { padding-left: 2px; }
td:nth-child(4) { text-align: center; }
.b { color: #00f; }
.g { color: #888; }
td input { appearance: none; display: block; margin: 2px auto 0; width: 13px; height: 13px; border: 1px solid #333; background: #fff; }
.rebar { display: inline-block; width: 12px; height: 10px; vertical-align: -1px; }
.on th { background: #ffcf87; color: #5c0050; }
.on td:nth-child(2) { background: #0078d7; color: #fff; }
.on td:nth-child(3) { background: #d9ebf9; }
td.exp { padding-left: 3px; }
.exp button { display: inline-block; width: 13px; height: 13px; margin-right: 4px; border: 1px solid #aaa; vertical-align: -2px; }
.exp svg { width: 11px; height: 11px; }

.status { position: relative; display: flex; gap: 2px; height: 23px; padding: 3px 0 0; font: 12px/16px "Liberation Serif", "Noto Sans CJK SC", serif; background: #f0f0f0; }
.status > span { border: 1px solid #d5d5d5; background: linear-gradient(#fdfdfd, #eee); padding: 1px; white-space: nowrap; }
.s1 { flex: 0 0 148px; } .s2 { flex: 0 0 78px; } .s3 { flex: 0 0 98px; } .s4 { flex: 0 0 48px; } .s5 { flex: 1; }
.ime { position: absolute; right: 0; bottom: 0; height: 24px; width: 184px; display: flex; align-items: center; justify-content: space-between; background: #fff; border: 1px solid #b9cfe8; padding-right: 4px; }
.ime svg { width: 16px; height: 16px; }
.ime .sg { width: 27px; height: 27px; margin: -4px 0 0 -1px; }
.ime b { color: #1b76d0; font: bold 15px/20px "Noto Sans CJK SC", sans-serif; }

.taskbar { display: flex; height: 40px; background: #020c10; color: #fff; }
.start { width: 48px; background: #000; display: flex; align-items: center; justify-content: center; }
.start svg { width: 16px; height: 16px; }
.find { flex: 0 0 344px; display: flex; align-items: center; gap: 5px; background: #333; padding: 0 14px 0 9px; }
.find svg { width: 22px; height: 22px; }
.find input { flex: 1; min-width: 0; font-size: 14px; line-height: 20px; }
.find input::placeholder { color: #9c9c9c; opacity: 1; }
.find .mic { width: 12px; height: 16px; }
.apps { display: flex; gap: 1px; padding-left: 3px; }
.apps button { width: 48px; display: flex; align-items: center; justify-content: center; }
.apps .gapped { margin-right: 4px; }
.apps svg { width: 24px; height: 24px; }
.run { background: linear-gradient(#76b9ed, #76b9ed) no-repeat center bottom / 40px 2px; }
.active.run { background-color: #33393c; background-size: 48px 2px; }
.tray { margin-left: auto; display: flex; align-items: center; gap: 8px; padding-right: 18px; }
.tray svg { width: 16px; height: 16px; }
.tray b { font: 14px/16px "Noto Sans CJK SC", sans-serif; margin-right: 6px; }
.tray time { width: 66px; margin: 0 2px 0 6px; text-align: center; line-height: 19px; }
.tray .note { position: relative; width: 26px; height: 26px; margin-left: 6px; }
.tray .note svg { width: 26px; height: 26px; }
.note span { position: absolute; left: 9px; top: 9px; width: 16px; text-align: center; }
.marks { position: absolute; left: 0; top: 0; width: 1366px; height: 768px; pointer-events: none; }
```
